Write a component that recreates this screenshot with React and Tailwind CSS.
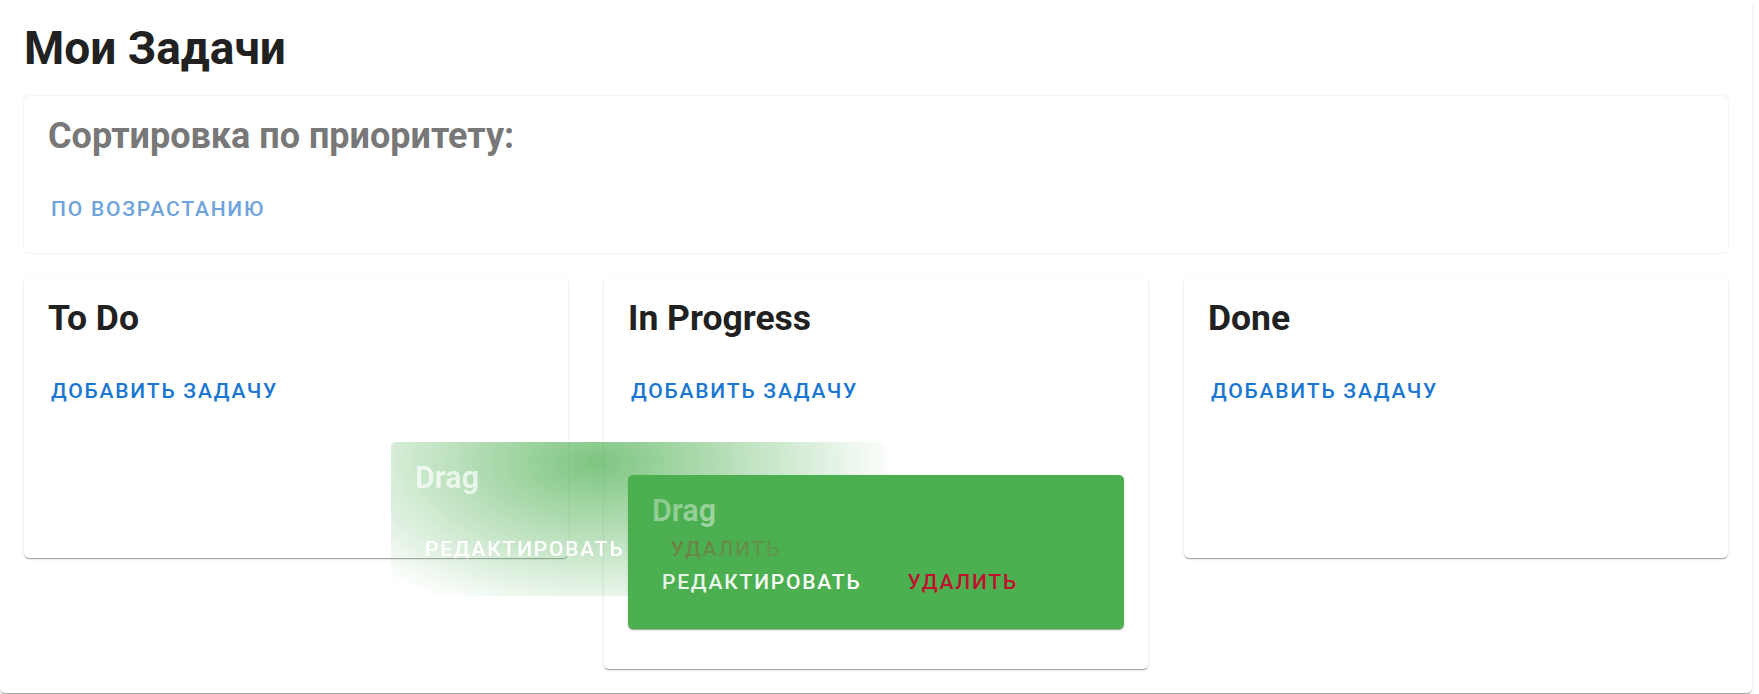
import React from "react";

const columns = [
  { id: "todo", title: "To Do", tasks: [] },
  { id: "progress", title: "In Progress", tasks: [{ id: 1, title: "Drag" }] },
  { id: "done", title: "Done", tasks: [] },
];

const paperShadow =
  "shadow-[0_2px_1px_-1px_rgba(0,0,0,0.2),0_1px_1px_0_rgba(0,0,0,0.14),0_1px_3px_0_rgba(0,0,0,0.12)]";

const btnText = "py-[8px] text-[21px] font-medium uppercase leading-[35px] tracking-[1.8px]";

const TaskCard = ({ task }) => {
  return (
    <div className={`rounded-[5px] bg-[#4caf50] pl-[24px] pr-[22px] pt-[18px] pb-[21px] ${paperShadow}`}>
      <h6 className="text-[30.5px] font-semibold leading-[36px] text-white/70">{task.title}</h6>
      <div className="mt-[28px] flex items-center gap-[26px]">
        <button className={`px-[10px] text-white ${btnText}`}>Редактировать</button>
        <button className={`px-[10px] text-[#c0102e] ${btnText}`}>Удалить</button>
      </div>
    </div>
  );
};

const Column = ({ column }) => {
  return (
    <div className={`rounded-[5px] bg-white px-[24px] pt-[20px] pb-[24px] ${paperShadow}`}>
      <h5 className="text-[35.5px] font-bold leading-[41px] text-[#212121]">{column.title}</h5>
      <button className={`mt-[27px] px-[3px] text-[#1976d2] ${btnText}`}>Добавить задачу</button>
      <div className={column.tasks.length ? "min-h-[117px] pt-[58px] pb-[16px]" : "min-h-[117px]"}>
        {column.tasks.map((task) => (
          <TaskCard key={task.id} task={task} />
        ))}
      </div>
    </div>
  );
};

export default function App() {
  return (
    <div className="min-h-screen bg-white font-['Roboto',sans-serif]">
      <div className={`relative w-[1752px] rounded-[5px] bg-white px-[24px] pt-[22px] pb-[24px] ${paperShadow}`}>
        <h4 className="text-[46px] font-bold leading-[53px] text-[#212121]">Мои Задачи</h4>

        <div className="mt-[21px] rounded-[5px] bg-white px-[24px] pt-[20px] pb-[18px] shadow-[0_0_2px_rgba(0,0,0,0.14)]">
          <h5 className="text-[36px] font-bold leading-[40px] text-[#787878]">Сортировка по приоритету:</h5>
          <button className={`mt-[28px] px-[3px] text-[#6ea3dc] ${btnText}`}>По возрастанию</button>
        </div>

        <div className="mt-[25px] grid grid-cols-3 items-start gap-x-[36px]">
          {columns.map((column) => (
            <Column key={column.id} column={column} />
          ))}
        </div>

        {/* drag preview left by the browser while a card is being moved */}
        <div className="pointer-events-none absolute left-[391px] top-[442px] w-[496px] opacity-90 [mask-image:radial-gradient(ellipse_300px_160px_at_205px_20px,rgba(0,0,0,0.8),transparent)] [-webkit-mask-image:radial-gradient(ellipse_300px_160px_at_205px_20px,rgba(0,0,0,0.8),transparent)]">
          <TaskCard task={{ id: 1, title: "Drag" }} />
        </div>
      </div>
    </div>
  );
}
